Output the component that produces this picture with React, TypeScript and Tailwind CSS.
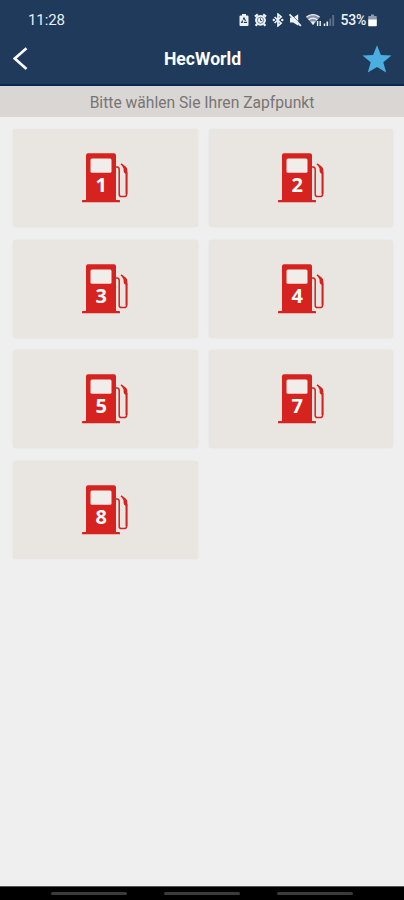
// ─── Config ───────────────────────────────────────────────────────────────────

const PUMPS = [1, 2, 3, 4, 5, 7, 8]

// ─── Status bar ───────────────────────────────────────────────────────────────

function StatusIcons() {
  return (
    <svg width="96" height="14" viewBox="239 12 96 14" className="text-[#eef2f6]" fill="none" stroke="currentColor">
      {/* Battery saver */}
      <path d="M242 13h4v1.5h1.5a1 1 0 0 1 1 1V24a1 1 0 0 1-1 1h-7a1 1 0 0 1-1-1v-8.5a1 1 0 0 1 1-1H242z" fill="currentColor" stroke="none" />
      <path d="M244 17l2.3 4.3h-4.6z" stroke="#1f3a5a" strokeWidth="1.2" strokeDasharray="3.2 1" />

      {/* Alarm */}
      <circle cx="260.5" cy="19.3" r="5.4" fill="currentColor" stroke="none" />
      <path d="M255 15.6l2.8-2.3M266 15.6l-2.8-2.3M257.2 23l-1.6 1.8M263.8 23l1.6 1.8" strokeWidth="2.2" />
      <circle cx="260.5" cy="19.3" r="3.1" stroke="#1f3a5a" strokeWidth="0.6" />
      <path d="M260.5 17.4v2.2h1.6" stroke="#1f3a5a" strokeWidth="0.9" />

      {/* Bluetooth */}
      <path d="M274.6 16l6.5 6.2-3.1 2.6V13.2l3.1 2.6-6.5 6.2" strokeWidth="1.7" />
      <circle cx="273.8" cy="19" r="1.2" fill="currentColor" stroke="none" />
      <circle cx="282.3" cy="19" r="1.2" fill="currentColor" stroke="none" />

      {/* Sound off */}
      <path d="M290 16.5h3.2l5-3.3v11.6l-5-3.3H290z" fill="currentColor" stroke="none" />
      <path d="M290.8 12.8l10.8 11.3" stroke="#1f3a5a" strokeWidth="0.8" />
      <path d="M289.5 13.4l11.4 11.4" strokeWidth="1.8" />

      {/* Wifi */}
      <path d="M306.2 16.2c4-3.8 9.6-3.8 13.6 0l-6.8 8z" fill="currentColor" stroke="none" opacity="0.5" />
      <path d="M306.5 16c3.8-3.3 9.2-3.3 13 0M308.7 18.8c2.6-2.1 6-2.1 8.6 0" strokeWidth="1.3" />
      <path d="M310.8 20.4h4.4L313 24z" fill="currentColor" stroke="none" />
      <path d="M317.6 20v5M320.2 20v5" strokeWidth="1.4" />

      {/* Signal */}
      <path d="M324.5 22.5V25M327.3 20.5V25" strokeWidth="1.6" />
      <path d="M330.3 17.5V25M333.2 14v11" strokeWidth="1.8" opacity="0.3" />
    </svg>
  )
}

function BatteryIcon() {
  return (
    <svg width="9" height="13" viewBox="0 0 9 13">
      <path d="M3 0.5h3V2h2a.8.8 0 0 1 .8.8V6H.2V2.8A.8.8 0 0 1 1 2h2z" fill="#8d9bac" />
      <path d="M.2 5.5h8.6v6a.8.8 0 0 1-.8.8H1a.8.8 0 0 1-.8-.8z" fill="#fff" />
    </svg>
  )
}

// ─── Pump card ────────────────────────────────────────────────────────────────

function PumpCard({ number }: { number: number }) {
  return (
    <button
      type="button"
      className="flex h-[98px] items-center justify-center rounded-[3px] bg-[#e9e6e2] shadow-[0_0_2px_rgba(90,80,70,0.08)]"
    >
      <svg width="48" height="52" viewBox="0 0 48 52">
        {/* Body with window and base plate */}
        <path
          fill="#d6231f"
          d="M7 1.2h26a2 2 0 0 1 2 2V48h3.2a.8.8 0 0 1 .8.8v1.5H1v-1.5a.8.8 0 0 1 .8-.8H5V3.2a2 2 0 0 1 2-2z"
        />
        <rect x="9.5" y="6.5" width="21" height="14.2" rx="1.5" fill="#f0edeb" />
        {/* Hose and nozzle */}
        <path
          d="M35 15h1.2q2 .3 2 2.4v24.8q0 2.4 2.2 2.4h2.8q2.4 0 2.4-2.4V18q0-1.6-1.2-2.6l-4.4-3.6"
          fill="none"
          stroke="#d6231f"
          strokeWidth="1.5"
        />
        <path d="M45.5 20v22" stroke="#d6231f" strokeWidth="1.8" />
        <path d="M40.6 12.8l5.4 4v5.4q-3.4-.5-3.4-3.4v-2z" fill="#d6231f" />
        <text
          x="20.3"
          y="39.5"
          textAnchor="middle"
          fill="#fff"
          fontSize="20"
          fontWeight="700"
          className="font-['Open_Sans',sans-serif]"
        >
          {number}
        </text>
      </svg>
    </button>
  )
}

// ─── Screen ───────────────────────────────────────────────────────────────────

export default function App() {
  return (
    <div className="flex h-[900px] w-[404px] flex-col bg-[#efefef] font-[Roboto,sans-serif]">
      <header className="h-[86px] border-b-2 border-[#0b2850] bg-[#1f3a5a] text-white">
        <div className="flex h-[38px] items-center pt-[2px] pr-[27px] pl-[28px]">
          <span className="text-[15px] tracking-[-0.1px] text-[#e8edf2]">11:28</span>
          <div className="ml-auto flex items-center">
            <StatusIcons />
            <span className="ml-[5px] text-[14px] font-medium tracking-[-0.2px] text-[#eef2f6]">53%</span>
            <span className="ml-0.5">
              <BatteryIcon />
            </span>
          </div>
        </div>

        <div className="flex h-[42px] items-center justify-between pr-3 pl-[13px]">
          <button type="button" aria-label="Zurück" className="w-[30px]">
            <svg width="16" height="24" viewBox="0 0 16 24" fill="none" stroke="#fff" strokeWidth="2.6">
              <path d="M13.5 1.2L1.8 11.5l11.7 10.5" />
            </svg>
          </button>
          <h1 className="text-[17.6px] font-bold">HecWorld</h1>
          <button type="button" aria-label="Favorit" className="w-[30px]">
            <svg width="30" height="29" viewBox="0 0 30 29" fill="#4aaee0">
              <path d="M15 .2l3.9 9.7 10.6.7-8.2 6.7 2.9 10.3L15 22.1l-9.2 5.5 2.9-10.3L.5 10.6l10.6-.7z" />
            </svg>
          </button>
        </div>
      </header>

      <div className="flex h-[31px] items-center justify-center bg-[#dad6d3] pt-0.5 text-[15.65px] text-[#777573]">
        Bitte wählen Sie Ihren Zapfpunkt
      </div>

      <main className="grid flex-1 grid-cols-2 content-start gap-x-[11px] gap-y-[12.7px] pt-3 pr-[11px] pl-[13px]">
        {PUMPS.map((n) => (
          <PumpCard key={n} number={n} />
        ))}
      </main>

      <nav className="flex h-[14px] items-center justify-center gap-[37px] border-t border-[#555] bg-black">
        <span className="h-[3px] w-[76px] rounded-full bg-[#3b3b3b]" />
        <span className="h-[3px] w-[76px] rounded-full bg-[#3b3b3b]" />
        <span className="h-[3px] w-[76px] rounded-full bg-[#3b3b3b]" />
      </nav>
    </div>
  )
}
